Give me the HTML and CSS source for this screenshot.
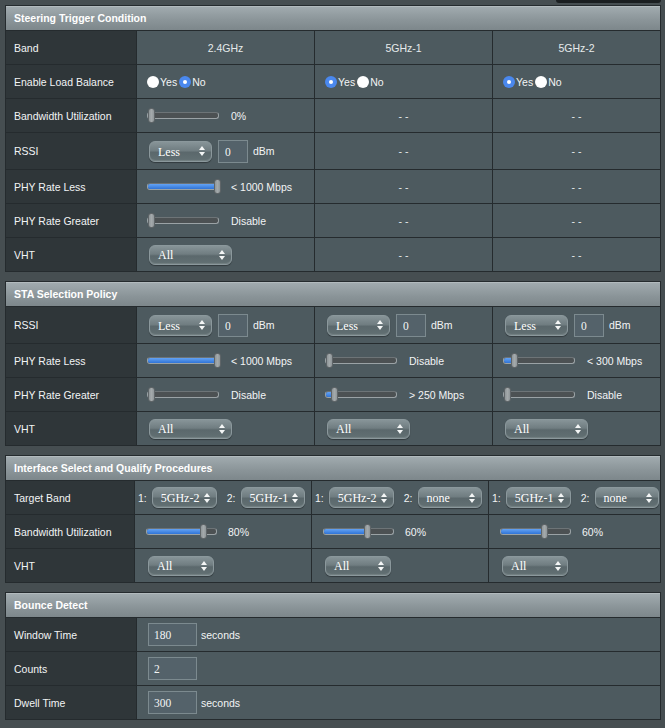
FILE: index.html
```html
<!DOCTYPE html>
<html lang="en">
<head>
<meta charset="utf-8">
<title>Smart Connect Rule</title>
<link rel="stylesheet" href="styles.css">
</head>
<body>
<div class="page">
  <div class="topstrip"><div class="topbtn"></div></div>

  <section class="panel cols4">
    <div class="ph">Steering Trigger Condition</div>

    <div class="lbl">Band</div>
    <div class="val ctr">2.4GHz</div>
    <div class="val ctr">5GHz-1</div>
    <div class="val ctr">5GHz-2</div>

    <div class="lbl">Enable Load Balance</div>
    <div class="val"><span class="radio"></span><span class="rl">Yes</span><span class="radio on"></span><span class="rl">No</span></div>
    <div class="val"><span class="radio on"></span><span class="rl">Yes</span><span class="radio"></span><span class="rl">No</span></div>
    <div class="val"><span class="radio on"></span><span class="rl">Yes</span><span class="radio"></span><span class="rl">No</span></div>

    <div class="lbl">Bandwidth Utilization</div>
    <div class="val"><div class="slider"><div class="fill" style="width:0px"></div><div class="thumb" style="left:0px"></div></div><span>0%</span></div>
    <div class="val ctr">- -</div>
    <div class="val ctr">- -</div>

    <div class="lbl tall">RSSI</div>
    <div class="val tall"><div class="sel w63"><span>Less</span><svg class="arr" width="6" height="10" viewBox="0 0 6 10"><path d="M0 4L3 0L6 4ZM0 6L3 10L6 6Z"/></svg></div><input class="inp w30" type="text" value="0"><span class="unit">dBm</span></div>
    <div class="val ctr tall">- -</div>
    <div class="val ctr tall">- -</div>

    <div class="lbl">PHY Rate Less</div>
    <div class="val"><div class="slider"><div class="fill" style="width:70px"></div><div class="thumb" style="left:66px"></div></div><span>&lt; 1000 Mbps</span></div>
    <div class="val ctr">- -</div>
    <div class="val ctr">- -</div>

    <div class="lbl">PHY Rate Greater</div>
    <div class="val"><div class="slider"><div class="fill" style="width:0px"></div><div class="thumb" style="left:0px"></div></div><span>Disable</span></div>
    <div class="val ctr">- -</div>
    <div class="val ctr">- -</div>

    <div class="lbl">VHT</div>
    <div class="val"><div class="sel w83"><span>All</span><svg class="arr" width="6" height="10" viewBox="0 0 6 10"><path d="M0 4L3 0L6 4ZM0 6L3 10L6 6Z"/></svg></div></div>
    <div class="val ctr">- -</div>
    <div class="val ctr">- -</div>
  </section>

  <section class="panel cols4">
    <div class="ph">STA Selection Policy</div>

    <div class="lbl tall">RSSI</div>
    <div class="val tall"><div class="sel w63"><span>Less</span><svg class="arr" width="6" height="10" viewBox="0 0 6 10"><path d="M0 4L3 0L6 4ZM0 6L3 10L6 6Z"/></svg></div><input class="inp w30" type="text" value="0"><span class="unit">dBm</span></div>
    <div class="val tall"><div class="sel w63"><span>Less</span><svg class="arr" width="6" height="10" viewBox="0 0 6 10"><path d="M0 4L3 0L6 4ZM0 6L3 10L6 6Z"/></svg></div><input class="inp w30" type="text" value="0"><span class="unit">dBm</span></div>
    <div class="val tall"><div class="sel w63"><span>Less</span><svg class="arr" width="6" height="10" viewBox="0 0 6 10"><path d="M0 4L3 0L6 4ZM0 6L3 10L6 6Z"/></svg></div><input class="inp w30" type="text" value="0"><span class="unit">dBm</span></div>

    <div class="lbl">PHY Rate Less</div>
    <div class="val"><div class="slider"><div class="fill" style="width:70px"></div><div class="thumb" style="left:66px"></div></div><span>&lt; 1000 Mbps</span></div>
    <div class="val"><div class="slider"><div class="fill" style="width:0px"></div><div class="thumb" style="left:0px"></div></div><span>Disable</span></div>
    <div class="val"><div class="slider"><div class="fill" style="width:9px"></div><div class="thumb" style="left:7px"></div></div><span>&lt; 300 Mbps</span></div>

    <div class="lbl">PHY Rate Greater</div>
    <div class="val"><div class="slider"><div class="fill" style="width:0px"></div><div class="thumb" style="left:0px"></div></div><span>Disable</span></div>
    <div class="val"><div class="slider"><div class="fill" style="width:7px"></div><div class="thumb" style="left:5px"></div></div><span>&gt; 250 Mbps</span></div>
    <div class="val"><div class="slider"><div class="fill" style="width:0px"></div><div class="thumb" style="left:0px"></div></div><span>Disable</span></div>

    <div class="lbl">VHT</div>
    <div class="val"><div class="sel w83"><span>All</span><svg class="arr" width="6" height="10" viewBox="0 0 6 10"><path d="M0 4L3 0L6 4ZM0 6L3 10L6 6Z"/></svg></div></div>
    <div class="val"><div class="sel w83"><span>All</span><svg class="arr" width="6" height="10" viewBox="0 0 6 10"><path d="M0 4L3 0L6 4ZM0 6L3 10L6 6Z"/></svg></div></div>
    <div class="val"><div class="sel w83"><span>All</span><svg class="arr" width="6" height="10" viewBox="0 0 6 10"><path d="M0 4L3 0L6 4ZM0 6L3 10L6 6Z"/></svg></div></div>
  </section>

  <section class="panel cols4b">
    <div class="ph">Interface Select and Qualify Procedures</div>

    <div class="lbl">Target Band</div>
    <div class="val tight"><span class="num">1:</span><div class="sel w65 nm"><span>5GHz-2</span><svg class="arr" width="6" height="10" viewBox="0 0 6 10"><path d="M0 4L3 0L6 4ZM0 6L3 10L6 6Z"/></svg></div><span class="num n2">2:</span><div class="sel w64 nm"><span>5GHz-1</span><svg class="arr" width="6" height="10" viewBox="0 0 6 10"><path d="M0 4L3 0L6 4ZM0 6L3 10L6 6Z"/></svg></div></div>
    <div class="val tight"><span class="num">1:</span><div class="sel w65 nm"><span>5GHz-2</span><svg class="arr" width="6" height="10" viewBox="0 0 6 10"><path d="M0 4L3 0L6 4ZM0 6L3 10L6 6Z"/></svg></div><span class="num n2">2:</span><div class="sel w64 nm"><span>none</span><svg class="arr" width="6" height="10" viewBox="0 0 6 10"><path d="M0 4L3 0L6 4ZM0 6L3 10L6 6Z"/></svg></div></div>
    <div class="val tight"><span class="num">1:</span><div class="sel w65 nm"><span>5GHz-1</span><svg class="arr" width="6" height="10" viewBox="0 0 6 10"><path d="M0 4L3 0L6 4ZM0 6L3 10L6 6Z"/></svg></div><span class="num n2">2:</span><div class="sel w64 nm"><span>none</span><svg class="arr" width="6" height="10" viewBox="0 0 6 10"><path d="M0 4L3 0L6 4ZM0 6L3 10L6 6Z"/></svg></div></div>

    <div class="lbl">Bandwidth Utilization</div>
    <div class="val pad11"><div class="slider s71"><div class="fill" style="width:56px"></div><div class="thumb" style="left:53px"></div></div><span>80%</span></div>
    <div class="val pad11"><div class="slider s71"><div class="fill" style="width:43px"></div><div class="thumb" style="left:40px"></div></div><span>60%</span></div>
    <div class="val pad11"><div class="slider s71"><div class="fill" style="width:43px"></div><div class="thumb" style="left:40px"></div></div><span>60%</span></div>

    <div class="lbl">VHT</div>
    <div class="val pad11"><div class="sel w66"><span>All</span><svg class="arr" width="6" height="10" viewBox="0 0 6 10"><path d="M0 4L3 0L6 4ZM0 6L3 10L6 6Z"/></svg></div></div>
    <div class="val pad11"><div class="sel w66"><span>All</span><svg class="arr" width="6" height="10" viewBox="0 0 6 10"><path d="M0 4L3 0L6 4ZM0 6L3 10L6 6Z"/></svg></div></div>
    <div class="val pad11"><div class="sel w66"><span>All</span><svg class="arr" width="6" height="10" viewBox="0 0 6 10"><path d="M0 4L3 0L6 4ZM0 6L3 10L6 6Z"/></svg></div></div>
  </section>

  <section class="panel cols2">
    <div class="ph">Bounce Detect</div>

    <div class="lbl">Window Time</div>
    <div class="val pad11"><input class="inp w49" type="text" value="180"><span class="unit2">seconds</span></div>

    <div class="lbl">Counts</div>
    <div class="val pad11"><input class="inp w49" type="text" value="2"></div>

    <div class="lbl">Dwell Time</div>
    <div class="val pad11"><input class="inp w49" type="text" value="300"><span class="unit2">seconds</span></div>
  </section>
</div>
</body>
</html>
```

FILE: styles.css
```css
html, body {
  margin: 0;
  padding: 0;
}

body {
  background: #464e51;
  font-family: "Liberation Sans", Arial, sans-serif;
  font-size: 10.5px;
  color: #f2f4f5;
}

.page {
  padding: 0 4px 6px 5px;
}

.topstrip {
  height: 5px;
  display: flex;
  justify-content: flex-end;
}

.topbtn {
  width: 105px;
  height: 3px;
  background: #1b1f21;
  border-radius: 0 0 7px 7px;
}

.panel {
  display: grid;
  gap: 1px;
  background: #252b2e;
  border: 1px solid #252b2e;
  grid-template-rows: 24px;
  grid-auto-rows: minmax(33px, auto);
  margin-bottom: 9px;
}

.cols4 {
  grid-template-columns: 130px 177px 177px 1fr;
}

.cols4b {
  grid-template-columns: 128px 176px 176px 1fr;
}

.cols2 {
  grid-template-columns: 130px 1fr;
}

.ph {
  grid-column: 1 / -1;
  display: flex;
  align-items: center;
  padding-left: 8px;
  font-weight: bold;
  color: #ffffff;
  background: linear-gradient(#a2acb0, #8a9498 60%, #7d878b);
  box-shadow: inset 0 1px 0 rgba(255, 255, 255, 0.18);
}

.lbl {
  background: #2f3639;
  display: flex;
  align-items: center;
  padding-left: 8px;
}

.val {
  background: #4d5a5f;
  display: flex;
  align-items: center;
  padding-left: 10px;
}

.ctr {
  justify-content: center;
  padding-left: 0;
  color: #e6eaeb;
}

.tall {
  min-height: 36px;
}

.tight {
  padding-left: 3px;
}

.pad11 {
  padding-left: 11px;
}

/* radio buttons */
.radio {
  width: 12px;
  height: 12px;
  border-radius: 50%;
  background: radial-gradient(circle at 60% 35%, #ffffff 60%, #e8e8e8 100%);
  display: inline-flex;
  align-items: center;
  justify-content: center;
  flex: none;
}

.radio.on {
  background: #4a88ee;
}

.radio.on::after {
  content: "";
  width: 4px;
  height: 4px;
  border-radius: 50%;
  background: #ffffff;
}

.rl {
  margin: 0 2px 0 1px;
}

/* select boxes */
.sel {
  display: inline-flex;
  align-items: center;
  justify-content: space-between;
  box-sizing: border-box;
  height: 21px;
  padding: 2px 6px 0 8px;
  margin-left: 2px;
  border: 1px solid #8b989c;
  border-radius: 6px;
  background: linear-gradient(#879498 0%, #707d81 45%, #5b686c 55%, #627073 100%);
  box-shadow: inset 0 -1px 1px rgba(255, 255, 255, 0.12), 0 1px 1px rgba(0, 0, 0, 0.35);
  font-family: "Liberation Serif", "Times New Roman", serif;
  font-size: 12px;
  color: #ffffff;
  flex: none;
}

.sel.nm {
  margin-left: 0;
}

.arr {
  fill: #f4f6f6;
  flex: none;
  margin-top: -2px;
}

.w63 { width: 63px; }
.w64 { width: 64px; }
.w65 { width: 65px; }
.w66 { width: 66px; height: 20px; }
.w83 { width: 83px; height: 20px; }

.num {
  margin-right: 5px;
}

.num.n2 {
  margin-left: 10px;
}

/* text inputs */
.inp {
  box-sizing: border-box;
  height: 23px;
  margin: 0 0 0 6px;
  padding: 1px 0 0 6px;
  border: 1px solid #7c8a8f;
  background: #54626a;
  color: #f3f5f5;
  font-family: "Liberation Serif", "Times New Roman", serif;
  font-size: 11.5px;
  outline: none;
}

.w30 { width: 30px; }

.w49 {
  width: 49px;
  margin-left: 0;
  padding-left: 5px;
}

.unit {
  margin-left: 5px;
}

.unit2 {
  margin-left: 4px;
}

/* sliders */
.slider {
  position: relative;
  width: 72px;
  height: 7px;
  box-sizing: border-box;
  margin-right: 12px;
  border-radius: 3px;
  background: #4c5153;
  border: 1px solid #9aa2a5;
  border-top-color: #6d7477;
  flex: none;
}

.slider.s71 {
  width: 71px;
  margin-right: 11px;
}

.fill {
  height: 100%;
  border-radius: 2px 0 0 2px;
  background: linear-gradient(#64a3f4, #3074d6);
}

.thumb {
  position: absolute;
  top: -5px;
  width: 7px;
  height: 15px;
  box-sizing: border-box;
  border-radius: 3px;
  border: 1px solid #5f6568;
  background: linear-gradient(90deg, #8f9699, #a3a9ab 50%, #8f9699);
}
```
